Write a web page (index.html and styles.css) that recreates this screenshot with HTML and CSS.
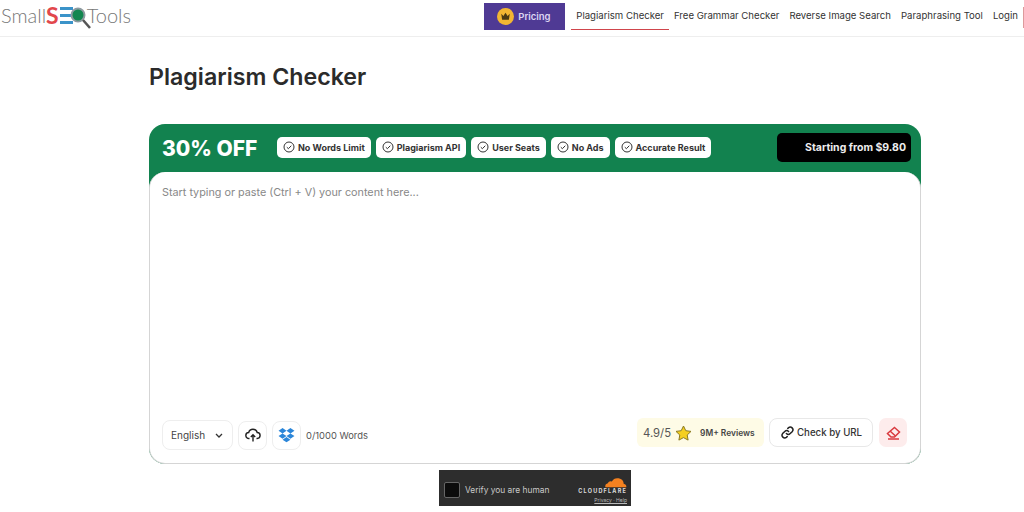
FILE: index.html
```html
<!DOCTYPE html>
<html lang="en">

<head>
    <meta charset="UTF-8">
    <meta name="viewport" content="width=device-width, initial-scale=1.0">
    <title>Plagiarism Checker</title>
    <link rel="stylesheet" href="styles.css">
</head>

<body>
    <header class="topbar">
        <a href="#" class="logo">
            <span>Small</span>
            <span class="logo-s">S</span>
            <svg class="logo-eq" width="34" height="26" viewBox="0 0 34 26">
                <path d="M1 4.500h13M1 11.500h11M1 18.500h13" stroke="#3b93c9" stroke-width="3" fill="none" />
                <circle cx="19" cy="11" r="6.500" fill="#12864f" stroke="#8d9aa0" stroke-width="2" />
                <path d="M24 16l7 8" stroke="#555" stroke-width="2.500" />
            </svg>
            <span>Tools</span>
        </a>
        <nav class="nav">
            <a href="#" class="pricing">
                <svg width="17" height="17" viewBox="0 0 16 16">
                    <circle cx="8" cy="8" r="8" fill="#f2b632" />
                    <path d="M4 5.500l2 2 2-3 2 3 2-2-.8 5.500H4.800z" fill="#4a3a12" />
                </svg>
                Pricing
            </a>
            <a href="#" class="nav-link active">Plagiarism Checker</a>
            <a href="#" class="nav-link">Free Grammar Checker</a>
            <a href="#" class="nav-link">Reverse Image Search</a>
            <a href="#" class="nav-link">Paraphrasing Tool</a>
            <a href="#" class="nav-link">Login</a>
            <span class="signup-edge"></span>
        </nav>
    </header>

    <main class="content">
        <h1>Plagiarism Checker</h1>

        <section class="checker">
            <div class="promo">
                <span class="discount">30% OFF</span>
                <ul class="perks">
                    <li><svg class="tick" viewBox="0 0 12 12"><circle cx="6" cy="6" r="5" /><path d="M3.800 6.200l1.600 1.500 2.900-3" /></svg>No Words Limit</li>
                    <li><svg class="tick" viewBox="0 0 12 12"><circle cx="6" cy="6" r="5" /><path d="M3.800 6.200l1.600 1.500 2.900-3" /></svg>Plagiarism API</li>
                    <li><svg class="tick" viewBox="0 0 12 12"><circle cx="6" cy="6" r="5" /><path d="M3.800 6.200l1.600 1.500 2.900-3" /></svg>User Seats</li>
                    <li><svg class="tick" viewBox="0 0 12 12"><circle cx="6" cy="6" r="5" /><path d="M3.800 6.200l1.600 1.500 2.900-3" /></svg>No Ads</li>
                    <li><svg class="tick" viewBox="0 0 12 12"><circle cx="6" cy="6" r="5" /><path d="M3.800 6.200l1.600 1.500 2.900-3" /></svg>Accurate Result</li>
                </ul>
                <a href="#" class="starting">Starting from $9.80</a>
            </div>

            <div class="editor">
                <p class="placeholder">Start typing or paste (Ctrl + V) your content here...</p>
                <div class="tools">
                    <div class="tools-left">
                        <button class="lang" type="button">
                            English
                            <svg width="8" height="5" viewBox="0 0 8 5"><path d="M1 1l3 3 3-3" fill="none" stroke="#333" stroke-width="1.300" /></svg>
                        </button>
                        <button class="icon-btn" type="button">
                            <svg width="16" height="16" viewBox="0 0 16 16" fill="none" stroke="#222" stroke-width="1.400">
                                <path d="M4.500 11.500H4a3 3 0 0 1-.3-6 4.400 4.400 0 0 1 8.500 0 3 3 0 0 1-.2 6h-.5" />
                                <path d="M8 14.500V8M5.800 10L8 7.800 10.200 10" />
                            </svg>
                        </button>
                        <button class="icon-btn" type="button">
                            <svg width="17" height="16" viewBox="0 0 16 15" fill="#2b86d9">
                                <path d="M4.300 1L0.500 3.500 4.300 6 8 3.500zM11.700 1L8 3.500 11.700 6l3.800-2.500zM0.500 8.500L4.300 11 8 8.500 4.300 6zM11.700 6L8 8.500l3.700 2.500 3.800-2.500zM4.300 11.900L8 14.400l3.700-2.500L8 9.400z" />
                            </svg>
                        </button>
                        <span class="count">0/1000 Words</span>
                    </div>
                    <div class="tools-right">
                        <div class="rating">
                            <span class="score">4.9/5</span>
                            <svg width="17" height="16" viewBox="0 0 17 16">
                                <path d="M8.500 1l2.300 4.700 5.200.7-3.800 3.600.9 5.100-4.600-2.500-4.600 2.500.9-5.100L1 6.400l5.200-.7z" fill="#f5cf1f" stroke="#8a7a22" stroke-width="1" stroke-linejoin="round" />
                            </svg>
                            <span class="reviews">9M+ Reviews</span>
                        </div>
                        <button class="url-btn" type="button">
                            <svg width="13" height="13" viewBox="0 0 24 24" fill="none" stroke="#222" stroke-width="2.800" stroke-linecap="round">
                                <path d="M10 14a5 5 0 0 0 7 0l4-4a5 5 0 0 0-7-7l-1.500 1.500" />
                                <path d="M14 10a5 5 0 0 0-7 0l-4 4a5 5 0 0 0 7 7l1.500-1.500" />
                            </svg>
                            Check by URL
                        </button>
                        <button class="erase-btn" type="button">
                            <svg width="15" height="14" viewBox="0 0 15 14" fill="none" stroke="#d93a3f" stroke-width="1.500">
                                <path d="M8.500 1.500l5 4.500-5 5H5L1.500 7.500z" />
                                <path d="M4 5l5.500 5M2 13h11" />
                            </svg>
                        </button>
                    </div>
                </div>
            </div>
        </section>

        <div class="captcha">
            <span class="captcha-box"></span>
            <span class="captcha-text">Verify you are human</span>
            <div class="cf">
                <svg width="24" height="12" viewBox="0 0 30 13">
                    <path d="M3 13a4 4 0 0 1 3-5 4 4 0 0 1 5-2 8 8 0 0 1 15 3 3 3 0 0 1 3 4z" fill="#f48120" />
                </svg>
                <span class="cf-name">CLOUDFLARE</span>
                <span class="cf-links">Privacy · Help</span>
            </div>
        </div>
    </main>
</body>

</html>
```

FILE: styles.css
```css
* {
    box-sizing: border-box;
}

body {
    margin: 0;
    font-family: Inter, "Open Sans", sans-serif;
    background-color: #fff;
    color: #222;
}

a {
    text-decoration: none;
    color: inherit;
}

button {
    font-family: inherit;
    cursor: pointer;
    background: #fff;
}

.topbar {
    display: flex;
    justify-content: space-between;
    height: 37px;
    border-bottom: 1px solid #eee;
}

.logo {
    display: flex;
    align-items: center;
    height: 30px;
    padding-left: 1px;
    font-family: Lato, sans-serif;
    font-size: 20px;
    font-weight: 300;
    color: #777;
}

.logo-s {
    font-weight: 700;
    font-size: 23px;
    color: #e2474c;
}

.logo-eq {
    margin-top: 4px;
    margin-right: -6px;
}

.nav {
    display: flex;
    align-items: flex-start;
    padding-top: 3px;
}

.pricing {
    display: flex;
    align-items: center;
    gap: 4px;
    height: 27px;
    width: 81px;
    margin-right: 6px;
    padding-left: 13px;
    background-color: #4f3a94;
    color: #ddd6f2;
    font-size: 9.500px;
    font-weight: 600;
}

.nav-link {
    height: 27px;
    padding: 0 5px;
    line-height: 25px;
    font-size: 9.600px;
    color: #333;
    white-space: nowrap;
}

.nav-link.active {
    border-bottom: 1px solid #d0454c;
}

.signup-edge {
    width: 1px;
    height: 21px;
    margin-top: 4px;
    border-left: 1px solid #dd9a9c;
}

.content {
    width: 772px;
    margin-left: 149px;
}

h1 {
    margin: 25px 0 32px;
    font-size: 23.200px;
    line-height: 30px;
    font-weight: 600;
    color: #2b2b2b;
}

.checker {
    display: flex;
    flex-direction: column;
    height: 340px;
    border-radius: 16px;
    background-color: #12824f;
}

.promo {
    display: flex;
    align-items: center;
    height: 48px;
    padding: 0 10px 2px 13px;
}

.discount {
    width: 115px;
    margin-top: 2px;
    font-size: 21px;
    font-weight: 800;
    color: #fff;
}

.perks {
    display: flex;
    gap: 5px;
    margin: 0;
    padding: 0;
    list-style: none;
}

.perks li {
    display: flex;
    align-items: center;
    gap: 3px;
    height: 21px;
    padding: 0 6px;
    border-radius: 5px;
    background-color: #fff;
    font-size: 9px;
    font-weight: 700;
    color: #333;
    white-space: nowrap;
}

.tick {
    width: 12px;
    height: 12px;
    fill: none;
    stroke: #333;
    stroke-width: 1;
}

.starting {
    display: flex;
    align-items: center;
    justify-content: flex-end;
    width: 134px;
    height: 29px;
    margin-left: auto;
    padding-right: 5px;
    border-radius: 5px;
    background-color: #000;
    color: #eee;
    font-size: 10.500px;
    font-weight: 700;
}

.editor {
    display: flex;
    flex: 1;
    flex-direction: column;
    justify-content: space-between;
    padding: 14px 12px 13px;
    border: 1px solid #d5d5d5;
    border-top: none;
    border-radius: 16px;
    background-color: #fff;
}

.placeholder {
    margin: 0;
    font-size: 10.800px;
    line-height: 14px;
    color: #888;
}

.tools {
    display: flex;
    justify-content: space-between;
    align-items: flex-end;
}

.tools-left,
.tools-right {
    display: flex;
    align-items: center;
}

.tools-right {
    margin: 0 1px 3px 0;
}

.lang {
    display: flex;
    align-items: center;
    justify-content: space-between;
    width: 71px;
    height: 30px;
    margin-right: 5px;
    padding: 0 9px 0 8px;
    border: 1px solid #eee;
    border-radius: 8px;
    font-size: 10px;
    color: #444;
}

.icon-btn {
    display: flex;
    align-items: center;
    justify-content: center;
    width: 29px;
    height: 29px;
    margin-right: 5px;
    padding: 0;
    border: 1px solid #eee;
    border-radius: 8px;
}

.count {
    font-size: 9.400px;
    color: #555;
}

.rating {
    display: flex;
    align-items: center;
    width: 127px;
    height: 29px;
    margin-right: 5px;
    padding-left: 6px;
    border-radius: 6px;
    background-color: #fefbe6;
}

.score {
    margin-right: 4px;
    font-size: 11.300px;
    color: #555;
}

.reviews {
    margin-left: 8px;
    font-size: 8.400px;
    font-weight: 600;
    color: #444;
}

.url-btn {
    display: flex;
    align-items: center;
    gap: 3px;
    width: 104px;
    height: 29px;
    margin-right: 6px;
    padding: 0 0 0 11px;
    border: 1px solid #e8e8e8;
    border-radius: 8px;
    font-size: 9.700px;
    font-weight: 500;
    color: #333;
    white-space: nowrap;
}

.erase-btn {
    display: flex;
    align-items: center;
    justify-content: center;
    width: 28px;
    height: 29px;
    padding: 0;
    border: none;
    border-radius: 7px;
    background-color: #fdecec;
}

.captcha {
    display: flex;
    align-items: center;
    width: 192px;
    height: 36px;
    margin: 6px 0 0 290px;
    padding: 3px 4px 0 5px;
    background-color: #2d2d2d;
}

.captcha-box {
    width: 16px;
    height: 16px;
    margin-right: 5px;
    border: 1px solid #666;
    border-radius: 2px;
    background-color: #0c0c0c;
}

.captcha-text {
    font-size: 8.400px;
    color: #c9c9c9;
}

.cf {
    display: flex;
    flex-direction: column;
    align-items: flex-end;
    margin-left: auto;
    line-height: 1;
}

.cf-name {
    margin-top: 1px;
    font-size: 5.500px;
    font-weight: 700;
    letter-spacing: 1.2px;
    color: #ddd;
}

.cf-links {
    margin-top: 4px;
    font-size: 5px;
    text-decoration: underline;
    color: #bbb;
}
```
